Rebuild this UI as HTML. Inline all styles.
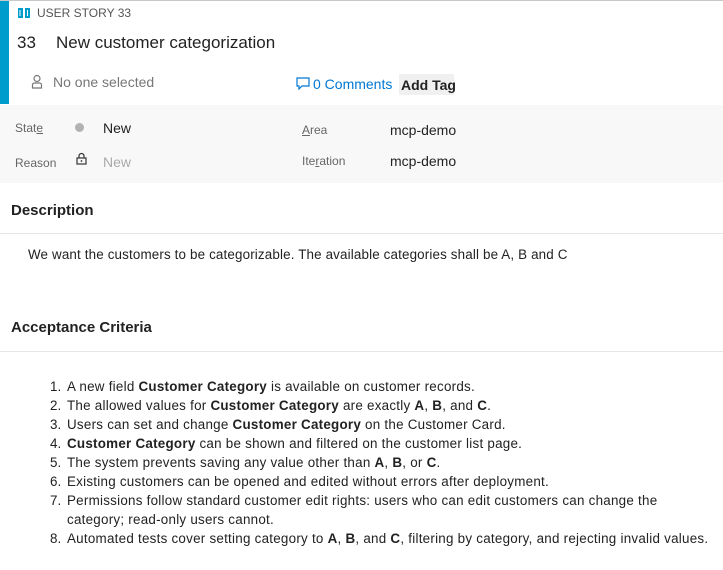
<!DOCTYPE html>
<html><head><meta charset="utf-8"><style>
*{margin:0;padding:0;box-sizing:border-box}
body{width:723px;height:570px;overflow:hidden;background:#fff;font-family:"Liberation Sans",sans-serif;color:#222;position:relative}
.a{position:absolute;white-space:nowrap}
.lbl{font-size:12px;color:#666}
.val{font-size:14px;color:#222}
ol{position:absolute;left:50px;top:377px;font-size:13.4px;letter-spacing:0.25px;line-height:19px;color:#222;list-style:none}
ol li{white-space:nowrap}
ol li span.n{display:inline-block;width:17px;letter-spacing:0}
ol li.ind{padding-left:17px}
</style></head><body>
<div class="a" style="left:0;top:0;width:723px;height:1px;background:#c8c8c8"></div>
<div class="a" style="left:0;top:1px;width:9px;height:103px;background:#009ccc"></div>
<svg class="a" style="left:17px;top:7px" width="14" height="13" viewBox="0 0 14 13"><path d="M1 1h5v10H1zM8 1h5v10H8z" fill="#009ccc"/><path d="M3 3v6M10.5 3v6" stroke="#fff" stroke-width="1"/></svg>
<div class="a" style="left:37px;top:6px;font-size:12px;color:#555">USER STORY 33</div>
<div class="a" style="left:17px;top:33px;font-size:17px;color:#222">33</div>
<div class="a" style="left:56px;top:33px;font-size:17px;color:#222">New customer categorization</div>
<svg class="a" style="left:31px;top:74px" width="12" height="16" viewBox="0 0 12 16"><circle cx="6" cy="4.5" r="3" fill="none" stroke="#777" stroke-width="1.2"/><path d="M1.5 14v-3a2 2 0 0 1 2-2h5a2 2 0 0 1 2 2v3z" fill="none" stroke="#777" stroke-width="1.2"/></svg>
<div class="a" style="left:53px;top:74px;font-size:14px;color:#777">No one selected</div>
<svg class="a" style="left:296px;top:77px" width="14" height="13" viewBox="0 0 14 13"><path d="M1 1h12v8H6l-3 3V9H1z" fill="none" stroke="#0078d4" stroke-width="1.2"/></svg>
<div class="a" style="left:313px;top:76px;font-size:14px;color:#0078d4">0 Comments</div>
<div class="a" style="left:399px;top:74px;width:55px;height:21px;background:#f0f0f0;font-size:14px;font-weight:bold;color:#222;padding:3px 0 0 2px">Add Tag</div>
<div class="a" style="left:0;top:105px;width:723px;height:78px;background:#f8f8f8"></div>
<div class="a lbl" style="left:15px;top:121px">Stat<u>e</u></div>
<div class="a" style="left:75px;top:123px;width:9px;height:9px;border-radius:50%;background:#b2b2b2"></div>
<div class="a val" style="left:103px;top:120px">New</div>
<div class="a lbl" style="left:15px;top:156px">Reason</div>
<svg class="a" style="left:76px;top:152px" width="11" height="13" viewBox="0 0 11 13"><path d="M3 6V4a2.5 2.5 0 0 1 5 0v2" fill="none" stroke="#333" stroke-width="1.2"/><rect x="1" y="6" width="9" height="6" fill="none" stroke="#333" stroke-width="1.2"/><circle cx="5.5" cy="9" r=".9" fill="#333"/></svg>
<div class="a val" style="left:103px;top:154px;color:#aaa">New</div>
<div class="a lbl" style="left:302px;top:123px"><u>A</u>rea</div>
<div class="a val" style="left:390px;top:122px">mcp-demo</div>
<div class="a lbl" style="left:302px;top:154px">Ite<u>r</u>ation</div>
<div class="a val" style="left:390px;top:153px">mcp-demo</div>
<div class="a" style="left:11px;top:202px;font-size:15px;font-weight:bold;color:#222">Description</div>
<div class="a" style="left:0;top:233px;width:723px;height:1px;background:#e6e6e6"></div>
<div class="a" style="left:28px;top:247px;font-size:13.4px;letter-spacing:0.15px;color:#222">We want the customers to be categorizable. The available categories shall be A, B and C</div>
<div class="a" style="left:11px;top:319px;font-size:15px;font-weight:bold;color:#222">Acceptance Criteria</div>
<div class="a" style="left:0;top:351px;width:723px;height:1px;background:#e6e6e6"></div>
<ol>
<li><span class="n">1.</span>A new field <b>Customer Category</b> is available on customer records.</li>
<li><span class="n">2.</span>The allowed values for <b>Customer Category</b> are exactly <b>A</b>, <b>B</b>, and <b>C</b>.</li>
<li><span class="n">3.</span>Users can set and change <b>Customer Category</b> on the Customer Card.</li>
<li><span class="n">4.</span><b>Customer Category</b> can be shown and filtered on the customer list page.</li>
<li><span class="n">5.</span>The system prevents saving any value other than <b>A</b>, <b>B</b>, or <b>C</b>.</li>
<li><span class="n">6.</span>Existing customers can be opened and edited without errors after deployment.</li>
<li><span class="n">7.</span>Permissions follow standard customer edit rights: users who can edit customers can change the</li>
<li class="ind">category; read-only users cannot.</li>
<li><span class="n">8.</span>Automated tests cover setting category to <b>A</b>, <b>B</b>, and <b>C</b>, filtering by category, and rejecting invalid values.</li>
</ol>
</body></html>
